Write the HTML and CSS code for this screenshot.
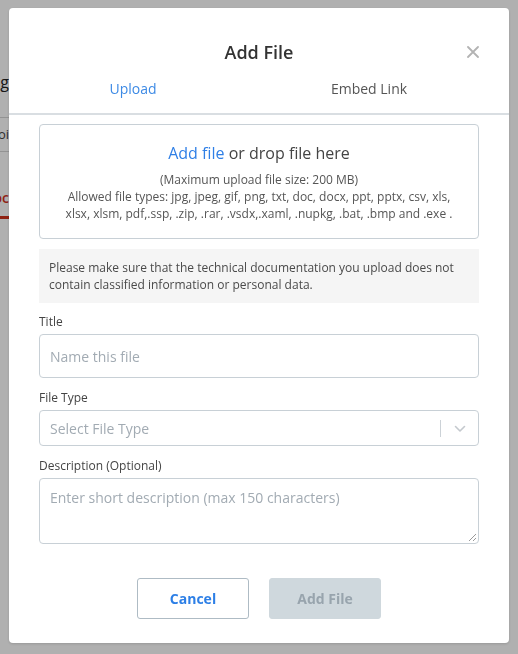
FILE: index.html
```html
<!DOCTYPE html>
<html lang="en">
<head>
<meta charset="utf-8">
<title>Add File</title>
<link rel="stylesheet" href="styles.css">
</head>
<body>
<div class="bg">
  <div class="bg-col">
    <div class="bg-title"><span>Meeting</span></div>
    <div class="bg-rule"></div>
    <div class="bg-row"><span>Viewpoi</span></div>
    <div class="bg-rule"></div>
    <div class="bg-tab"><span>Doc</span></div>
  </div>
</div>
<div class="overlay">
  <div class="modal" role="dialog" aria-label="Add File">
    <div class="modal-head">
      <h1 class="modal-title">Add File</h1>
      <button class="close" aria-label="Close">
        <svg width="12" height="12" viewBox="0 0 12 12"><path d="M1 1 L11 11 M11 1 L1 11" stroke="#b3b3b3" stroke-width="1.8" fill="none" stroke-linecap="round"/></svg>
      </button>
    </div>
    <div class="tabs">
      <div class="tab active">Upload</div>
      <div class="tab">Embed Link</div>
    </div>
    <div class="modal-body">
      <div class="dropzone">
        <div class="drop-main"><span class="link">Add file</span> or drop file here</div>
        <div class="drop-info">(Maximum upload file size: 200 MB)<br>Allowed file types: jpg, jpeg, gif, png, txt, doc, docx, ppt, pptx, csv, xls,<br>xlsx, xlsm, pdf,.ssp, .zip, .rar, .vsdx,.xaml, .nupkg, .bat, .bmp and .exe .</div>
      </div>
      <div class="notice">Please make sure that the technical documentation you upload does not<br>contain classified information or personal data.</div>
      <div class="group first">
        <label class="label">Title</label>
        <div class="input">Name this file</div>
      </div>
      <div class="group">
        <label class="label">File Type</label>
        <div class="select">
          <span class="select-ph">Select File Type</span>
          <span class="select-sep"></span>
          <span class="select-arrow">
            <svg width="12" height="8" viewBox="0 0 12 8"><path d="M1.5 1.5 L6 6 L10.5 1.5" stroke="#c4c9ce" stroke-width="1.6" fill="none" stroke-linecap="round" stroke-linejoin="round"/></svg>
          </span>
        </div>
      </div>
      <div class="group">
        <label class="label">Description (Optional)</label>
        <div class="textarea">
          <span>Enter short description (max 150 characters)</span>
          <svg class="grip" width="10" height="10" viewBox="0 0 10 10"><path d="M9 2 L2 9 M9 6 L6 9" stroke="#9a9a9a" stroke-width="1" fill="none"/></svg>
        </div>
      </div>
    </div>
    <div class="actions">
      <button class="btn btn-cancel">Cancel</button>
      <button class="btn btn-add">Add File</button>
    </div>
  </div>
</div>
</body>
</html>
```
FILE: styles.css
```css
* { box-sizing: border-box; }
html, body { margin: 0; padding: 0; }
body {
  width: 518px;
  height: 654px;
  overflow: hidden;
  background: #fff;
  font-family: "Open Sans", "Noto Sans", sans-serif;
  color: #333;
}
.bg { display: flex; }
.bg-col {
  width: 9px;
  overflow: hidden;
  display: flex;
  flex-direction: column;
}
.bg-title, .bg-row, .bg-tab {
  display: flex;
  justify-content: flex-end;
  white-space: nowrap;
}
.bg-title {
  margin-top: 72px;
  height: 20px;
  line-height: 20px;
  font-size: 16px;
  color: #222;
}
.bg-rule {
  border-top: 1px solid #d6d6d6;
  margin-top: 25px;
}
.bg-row {
  margin-top: 7px;
  font-size: 13px;
  line-height: 18px;
  color: #444;
}
.bg-rule + .bg-tab { margin-top: 36px; }
.bg-row + .bg-rule { margin-top: 8px; }
.bg-tab {
  font-size: 14px;
  line-height: 20px;
  color: #d0301b;
  font-weight: 600;
  padding-bottom: 8px;
  border-bottom: 3px solid #d0301b;
}
.overlay {
  position: fixed;
  inset: 0;
  background: rgba(0, 0, 0, 0.31);
  padding: 8px 9px 11px 9px;
  display: flex;
}
.modal {
  width: 500px;
  height: 635px;
  background: #fff;
  border-radius: 4px;
  display: flex;
  flex-direction: column;
  box-shadow: 0 1px 3px rgba(0,0,0,0.15);
}
.modal-head {
  position: relative;
  padding-top: 32px;
  text-align: center;
}
.modal-title {
  margin: 0;
  font-size: 18px;
  line-height: 24px;
  font-weight: 600;
  color: #333;
}
.close {
  position: absolute;
  right: 30px;
  top: 38px;
  width: 12px;
  height: 12px;
  padding: 0;
  border: 0;
  background: none;
  display: flex;
}
.tabs {
  display: flex;
  gap: 48px;
  padding: 15px 0 14px 30px;
  border-bottom: 2px solid #d9dee2;
}
.tab {
  width: 188px;
  text-align: center;
  font-size: 14px;
  line-height: 20px;
  color: #555;
}
.tab.active { color: #3d8ae5; }
.modal-body {
  padding: 9px 30px 0 30px;
  display: flex;
  flex-direction: column;
}
.dropzone {
  border: 1px solid #c8d0d6;
  border-radius: 4px;
  height: 115px;
  padding-top: 17px;
  text-align: center;
}
.drop-main {
  font-size: 16px;
  line-height: 22px;
  color: #444;
}
.link { color: #2f7fe6; }
.drop-info {
  margin-top: 7px;
  font-size: 12px;
  line-height: 17px;
  color: #555;
  white-space: nowrap;
}
.notice {
  margin-top: 10px;
  background: #f5f5f5;
  padding: 10px 10px;
  font-size: 12px;
  line-height: 17px;
  color: #4a4a4a;
  white-space: nowrap;
}
.group {
  margin-top: 10px;
  display: flex;
  flex-direction: column;
}
.group + .group { margin-top: 11px; }
.label {
  font-size: 12px;
  line-height: 17px;
  color: #444;
  margin-bottom: 4px;
}
.input, .select, .textarea {
  border: 1px solid #c8d0d6;
  border-radius: 4px;
  font-size: 14px;
  color: #a2abb3;
  padding-left: 10px;
}
.input {
  height: 44px;
  display: flex;
  align-items: center;
}
.select {
  height: 36px;
  display: flex;
  align-items: center;
}
.select-ph { flex: 1; }
.select-sep {
  width: 1px;
  height: 17px;
  background: #ccd2d7;
}
.select-arrow {
  width: 37px;
  display: flex;
  justify-content: center;
  padding-top: 1px;
}
.textarea {
  position: relative;
  height: 66px;
  padding-top: 9px;
  line-height: 20px;
}
.grip {
  position: absolute;
  right: 1px;
  bottom: 1px;
}
.actions {
  margin-top: 34px;
  display: flex;
  justify-content: center;
  gap: 20px;
}
.btn {
  width: 112px;
  height: 41px;
  border-radius: 3px;
  font-family: "Open Sans", "Noto Sans", sans-serif;
  font-size: 14px;
  font-weight: 700;
  padding: 0;
}
.btn-cancel {
  background: #fff;
  border: 1px solid #aebbc4;
  color: #2d7fe6;
}
.btn-add {
  background: #cfd8dd;
  border: 1px solid #cfd8dd;
  color: #98a4ad;
}
```
